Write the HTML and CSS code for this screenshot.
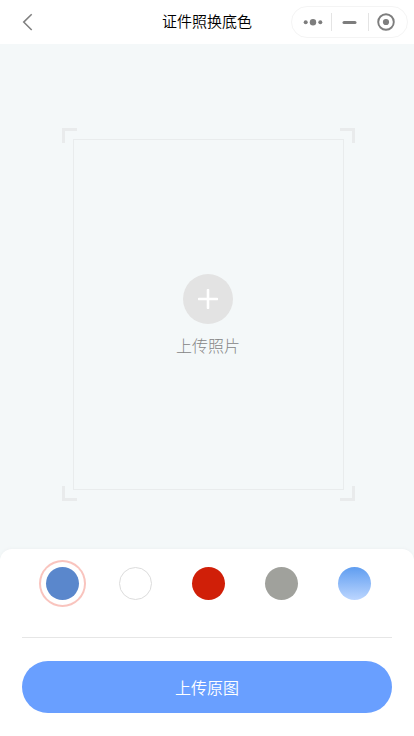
FILE: index.html
```html
<!DOCTYPE html>
<html lang="zh-CN">
<head>
<meta charset="utf-8">
<meta name="viewport" content="width=device-width, initial-scale=1">
<title>证件照换底色</title>
<link rel="stylesheet" href="styles.css">
</head>
<body>
<header class="navbar">
  <button class="back" aria-label="返回">
    <svg width="12" height="18" viewBox="0 0 12 18"><path d="M9.7 1.2 1.7 9.1 9.7 17" fill="none" stroke="#7f7f7f" stroke-width="1.5"/></svg>
  </button>
  <h1 class="title">证件照换底色</h1>
  <div class="capsule">
    <svg width="117" height="32" viewBox="0 0 117 32">
      <rect x=".5" y=".5" width="116" height="31" rx="15.5" fill="#fff" stroke="#f4f4f4"/>
      <g fill="#7d7d7d">
        <circle cx="14.7" cy="16.2" r="2"/><circle cx="22" cy="16.2" r="3.2"/><circle cx="29.3" cy="16.2" r="2"/>
        <rect x="51.5" y="15" width="14" height="3" rx="1.5"/>
        <circle cx="95" cy="16" r="3.1"/>
      </g>
      <circle cx="95" cy="16" r="7.8" fill="none" stroke="#7d7d7d" stroke-width="1.9"/>
      <path d="M40.5 7v18M77.5 7v18" stroke="#e4e4e4"/>
    </svg>
  </div>
</header>
<main class="stage">
  <div class="frame">
    <div class="photo">
      <button class="plus" aria-label="上传照片">
        <svg width="20" height="20" viewBox="0 0 20 20"><path d="M10 1v18M1 10h18" stroke="#fff" stroke-width="2.6" stroke-linecap="round"/></svg>
      </button>
      <span class="hint">上传照片</span>
    </div>
    <svg class="corners" width="293" height="373" viewBox="0 0 293 373">
      <path d="M1.5 15V1.5H15M278 1.5h13.5V15M1.5 358v13.5H15M278 371.5h13.5V358" fill="none" stroke="#e9ebec" stroke-width="3"/>
    </svg>
  </div>
</main>
<section class="panel">
  <div class="swatches">
    <div class="swatch blue selected"></div>
    <div class="swatch white"></div>
    <div class="swatch red"></div>
    <div class="swatch gray"></div>
    <div class="swatch gradient"></div>
  </div>
  <button class="upload">上传原图</button>
</section>
</body>
</html>
```
FILE: styles.css
```css
* { box-sizing: border-box; }
body {
  margin: 0;
  height: 736px;
  display: flex;
  flex-direction: column;
  overflow: hidden;
  background: #f4f8f9;
  font-family: "Noto Sans CJK SC", sans-serif;
}
button { border: 0; padding: 0; background: none; font: inherit; }
svg { display: block; }
.navbar {
  height: 44px;
  flex: none;
  display: grid;
  grid-template-columns: 123px 1fr 123px;
  align-items: center;
  background: #fff;
}
.back { width: 12px; margin-left: 22px; }
.title {
  margin: 0;
  text-align: center;
  font-size: 15px;
  line-height: 42px;
  padding-bottom: 2px;
  font-weight: 350;
  color: #000;
  white-space: nowrap;
}
.capsule { width: 117px; }
.stage { flex: 1; padding: 84px 0 0 62px; }
.frame { position: relative; width: 293px; height: 373px; padding: 11px; }
.photo {
  width: 271px;
  height: 351px;
  border: 1px solid #e9eced;
  display: flex;
  flex-direction: column;
  align-items: center;
  padding: 134px 1px 0 0;
}
.corners { position: absolute; left: 0; top: 0; pointer-events: none; }
.plus {
  width: 50px;
  height: 50px;
  flex: none;
  border-radius: 50%;
  background: #e3e3e3;
  display: flex;
  align-items: center;
  justify-content: center;
}
.hint { margin-top: 9px; font-size: 16px; line-height: 24px; font-weight: 300; color: #858585; }
.panel {
  height: 187px;
  flex: none;
  padding: 11px 22px 0;
  background: #fff;
  border-radius: 12px 12px 0 0;
  box-shadow: 0 -1px 3px #eef2f3;
}
.swatches {
  height: 78px;
  padding: 7px 21px 0 24px;
  border-bottom: 1px solid #e6e6e6;
  display: flex;
  justify-content: space-between;
}
.swatch { width: 33px; height: 33px; border-radius: 50%; }
.selected { box-shadow: 0 0 0 5px #fff, 0 0 0 7px #f9c4be; }
.blue { background: #5a87cc; }
.white { background: #fff; border: 1px solid #dcdcdc; }
.red { background: #d01f08; }
.gray { background: #a0a19c; }
.gradient { background: linear-gradient(#5f9df0, #bcd6ff); }
.upload {
  display: block;
  width: 100%;
  height: 52px;
  margin-top: 23px;
  border-radius: 26px;
  background: #699fff;
  color: #fff;
  font-size: 16px;
  font-weight: 350;
  line-height: 52px;
}
```
